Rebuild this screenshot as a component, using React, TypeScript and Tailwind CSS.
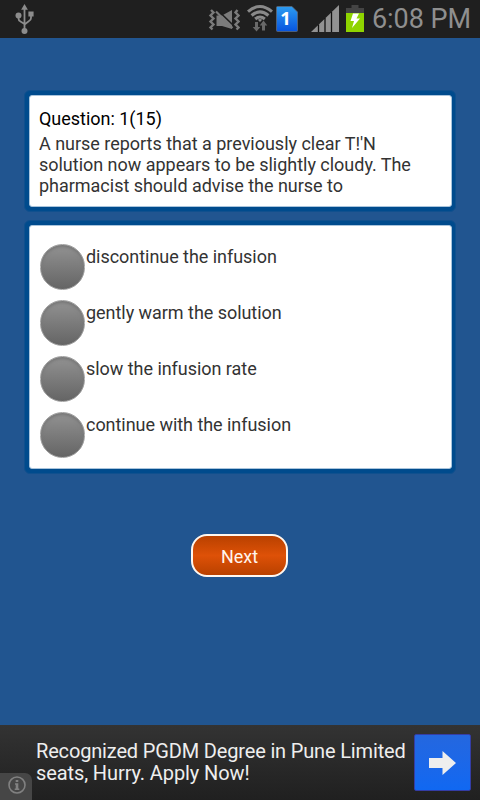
import type { ReactNode } from 'react';

const QUESTION = ["A nurse reports that a previously clear T!'N", 'solution now appears to be slightly cloudy. The', 'pharmacist should advise the nurse to'];

const ANSWERS = [
  'discontinue the infusion',
  'gently warm the solution',
  'slow the infusion rate',
  'continue with the infusion',
];

function UsbIcon() {
  return (
    <svg width="20" height="32" viewBox="0 0 20 32" fill="#8c8c8c">
      <path d="M9.500 1 12.900 6.800H6.100Z" />
      <path d="M9.500 5V27M3.500 12v3.500q0 2 2 3l4 2.500M16 10v5q0 2-2 3l-4.500 3.500" fill="none" stroke="#8c8c8c" strokeWidth="1.800" />
      <circle cx="3.500" cy="12.500" r="3" />
      <path d="M13.400 8.400h5.200v5h-5.200z" />
      <circle cx="9.500" cy="28" r="3" />
    </svg>
  );
}

function VibrateMuteIcon() {
  return (
    <svg width="32" height="24" viewBox="0 0 32 24" fill="#7b7b7b">
      <path d="M3 2 5.500 4.500 2.500 7.500 5.500 10.500 2.500 13.500 5.500 16.500 2.500 19.500 4.500 21.500" fill="none" stroke="#7b7b7b" strokeWidth="2.400" />
      <path d="M29.500 2 27.500 4.500 30.500 7.500 27.500 10.500 30.500 13.500 27.500 16.500 30.500 19.500 28.500 21.500" fill="none" stroke="#7b7b7b" strokeWidth="2.400" />
      <path d="M8.500 7.500H14L24 2V21L14 18H8.500z" />
      <path d="M9.500 2 25.500 17.500" stroke="#1f1f1f" strokeWidth="1.600" />
      <path d="M8 3.500 24.500 20" stroke="#7b7b7b" strokeWidth="2.200" />
    </svg>
  );
}

function WifiIcon() {
  return (
    <svg width="26" height="28" viewBox="0 0 26 28" fill="none">
      <path d="M1 7.600Q13-2.600 25 7.600M4.600 11.500Q13 4.200 21.400 11.500M8.200 15Q13 11 17.800 15" stroke="#898989" strokeWidth="3.100" />
      <path d="M10.800 15.800q2.200-1.500 4.400 0L13 18z" fill="#898989" />
      <path d="M8 18h3v5h2.300l-3.800 4.500L5.700 23H8zM15 26.500v-5h-2.300l3.800-5 3.800 5H18v5z" fill="#696969" />
    </svg>
  );
}

function SimIcon() {
  return (
    <svg width="22" height="26" viewBox="0 0 22 26">
      <defs>
        <linearGradient id="sim" x1="0" y1="0" x2="0" y2="1">
          <stop offset="0" stopColor="#2d9cf0" />
          <stop offset="1" stopColor="#0754df" />
        </linearGradient>
      </defs>
      <path d="M1.500.5H16L21.500 6v18.500q0 1-1 1h-19q-1 0-1-1v-23q0-1 1-1z" fill="url(#sim)" stroke="#5c6878" strokeWidth=".8" />
      <text x="9.500" y="19" textAnchor="middle" fill="#fff" fontFamily="Open Sans, sans-serif" fontWeight="700" fontSize="18.500">1</text>
    </svg>
  );
}

function SignalIcon() {
  return (
    <svg width="28" height="27" viewBox="0 0 28 27" fill="#929292">
      <path d="M0 27 28 0V27z" />
      <path d="M7.500 19.500V27M14 13V27M20.500 7V27" stroke="#111" strokeWidth="1.300" />
    </svg>
  );
}

function BatteryIcon() {
  return (
    <svg width="18" height="27" viewBox="0 0 18 27">
      <path d="M5.500 0h7v3H18v5H0V3h5.500z" fill="#444" />
      <path d="M0 8h18v19H0z" fill="#8fd400" />
      <path d="M7 8.500h6L10.500 13.500H14L6 23l2-7H4.500z" fill="#fff" />
    </svg>
  );
}

function StatusBar() {
  return (
    <header className="flex h-[38px] bg-[#1f1f1f]">
      <div className="pt-[3px] pl-[15px]"><UsbIcon /></div>
      <div className="ml-auto flex pr-[9px]">
        <div className="pt-2"><VibrateMuteIcon /></div>
        <div className="ml-[7px] pt-[4px]"><WifiIcon /></div>
        <div className="ml-[3px] pt-[6px]"><SimIcon /></div>
        <div className="ml-[13px] pt-[5px]"><SignalIcon /></div>
        <div className="ml-[7px] pt-[5px]"><BatteryIcon /></div>
        <div className="ml-2 w-[99px] text-[27px] leading-[38px] tracking-[-0.05px] whitespace-nowrap text-[#8f8f8f]">6:08 PM</div>
      </div>
    </header>
  );
}

function Panel({ children, className }: { children: ReactNode; className: string }) {
  return (
    <section className={`mx-[24px] rounded-[6px] border border-[#10508e] bg-[#004b8d] px-[3.5px] pt-[3.5px] pb-[4px] ${className}`}>
      <div className="h-full rounded-[3px] border border-[#a9c4dc] bg-white pl-[9.5px]">{children}</div>
    </section>
  );
}

export default function App() {
  return (
    <div className="flex h-[800px] w-[480px] flex-col overflow-hidden bg-[#215590] font-['Roboto','Liberation_Sans',sans-serif]">
      <StatusBar />

      <main className="flex flex-1 flex-col pt-[52px]">
        <Panel className="h-[122px]">
          <div className="pt-[12.5px] text-[18px] leading-[21px] tracking-[-0.02px] text-black">Question: 1(15)</div>
          <div className="mt-[4px] text-[18px] leading-[21px] tracking-[-0.02px] text-[#333]">
            {QUESTION.map((line) => (
              <p key={line} className="whitespace-nowrap">{line}</p>
            ))}
          </div>
        </Panel>

        <Panel className="mt-[8px] h-[254px]">
          <div className="flex flex-col gap-[10px] pt-[18.5px]">
            {ANSWERS.map((answer) => (
              <label key={answer} className="flex h-[46px] pl-[0.5px]">
                <span className="h-[46px] w-[45.500px] rounded-full border border-[#a0a0a0] bg-linear-to-b from-[#929292] to-[#656565] shadow-[inset_0_2px_3px_#777]" />
                <span className="pt-[2px] pl-px text-[18px] leading-[21px] tracking-[-0.04px] text-[#333]">{answer}</span>
              </label>
            ))}
          </div>
        </Panel>

        <button className="mt-[60px] ml-[191px] h-[43px] w-[97px] rounded-[16px] border-2 border-[#fff7ef] bg-linear-to-b from-[#b94100] via-[#de5108] to-[#b94100] pt-[2px] text-[18px] text-[#fff5ee]">
          Next
        </button>
      </main>

      <footer className="flex h-[75px] bg-linear-to-b from-[#333] to-[#202020]">
        <div className="flex w-[32px] items-end">
          <div className="flex h-[27px] w-[32px] items-center justify-center rounded-tr-[7px] bg-[#464646] pb-[3px] pl-[2px]">
            <svg width="18" height="18" viewBox="0 0 18 18" fill="#818181">
              <circle cx="9" cy="9" r="8" fill="none" stroke="#818181" strokeWidth="1.600" />
              <path d="M7.700 4h2.600v2H7.700zM7 7.300h3.300V12.500H11.300V14H6.700V12.500H7.700V8.700H7z" />
            </svg>
          </div>
        </div>
        <div className="pt-[15px] pl-[4px] text-[20px] leading-[22px] tracking-[-0.16px] whitespace-nowrap text-[#eee]">
          <p>Recognized PGDM Degree in Pune Limited</p>
          <p className="tracking-[-0.1px]">seats, Hurry. Apply Now!</p>
        </div>
        <div className="mt-[9px] mr-[9px] ml-auto flex size-[57px] items-center justify-center rounded-[2px] border border-[#343da5] bg-linear-to-b from-[#2467df] to-[#1068f2]">
          <svg width="27" height="24" viewBox="0 0 27 24" fill="#eee">
            <path d="M0 7h13.500V0L27 12 13.500 24V17H0z" />
          </svg>
        </div>
      </footer>
    </div>
  );
}
